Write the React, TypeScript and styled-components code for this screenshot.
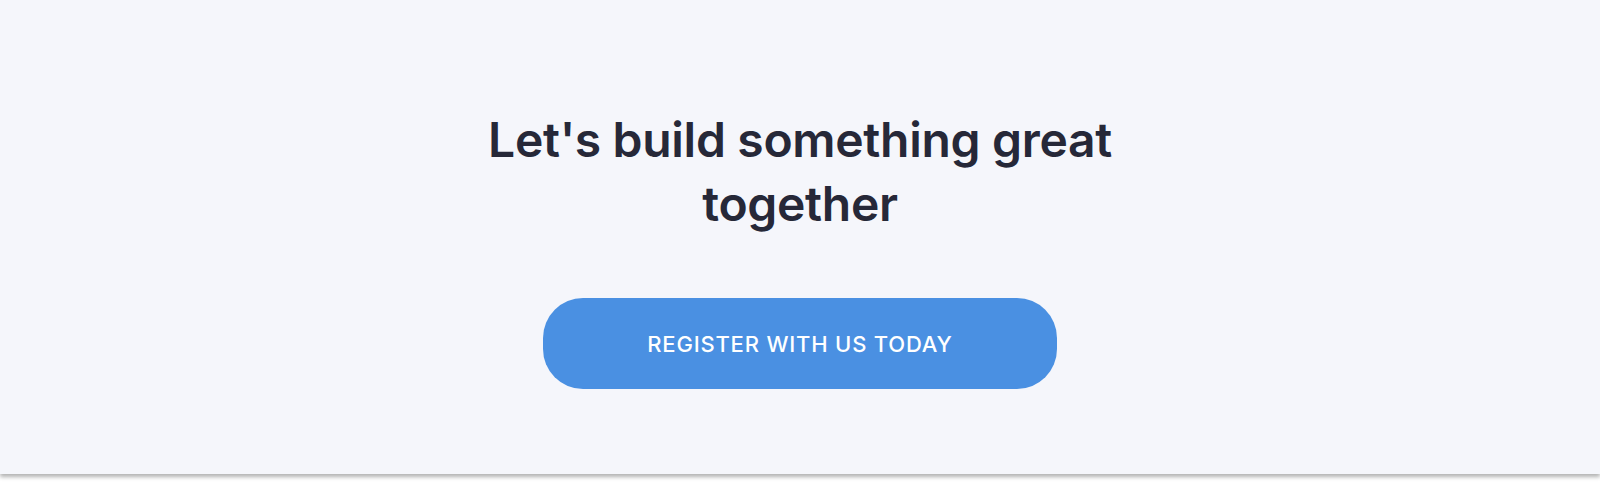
import React from "react";
import styled, { createGlobalStyle } from "styled-components";

const Global = createGlobalStyle`
  html, body { margin: 0; padding: 0; background: #ffffff; }
  body { font-family: Inter, "Open Sans", sans-serif; }
`;

const Page = styled.div`
  padding-bottom: 9px;
`;

const Section = styled.section`
  height: 474px;
  background: #f5f6fb;
  box-shadow: 0 3px 4px rgba(0, 0, 0, 0.3);
  display: flex;
  flex-direction: column;
  align-items: center;
  padding-top: 108px;
  box-sizing: border-box;
`;

const Heading = styled.h2`
  margin: 0;
  width: 700px;
  text-align: center;
  font-family: Inter, "Open Sans", sans-serif;
  font-weight: 600;
  font-size: 48px;
  line-height: 64px;
  letter-spacing: -0.3px;
  color: #262838;
`;

const Button = styled.button`
  margin-top: 62px;
  width: 514px;
  height: 91px;
  border: none;
  border-radius: 40px;
  background: #4a90e2;
  color: #ffffff;
  font-family: Inter, "Open Sans", sans-serif;
  font-weight: 500;
  font-size: 22px;
  letter-spacing: 0.8px;
  text-transform: uppercase;
  cursor: pointer;
`;

export default function App() {
  return (
    <Page>
      <Global />
      <Section>
        <Heading>Let's build something great together</Heading>
        <Button>Register with us today</Button>
      </Section>
    </Page>
  );
}
